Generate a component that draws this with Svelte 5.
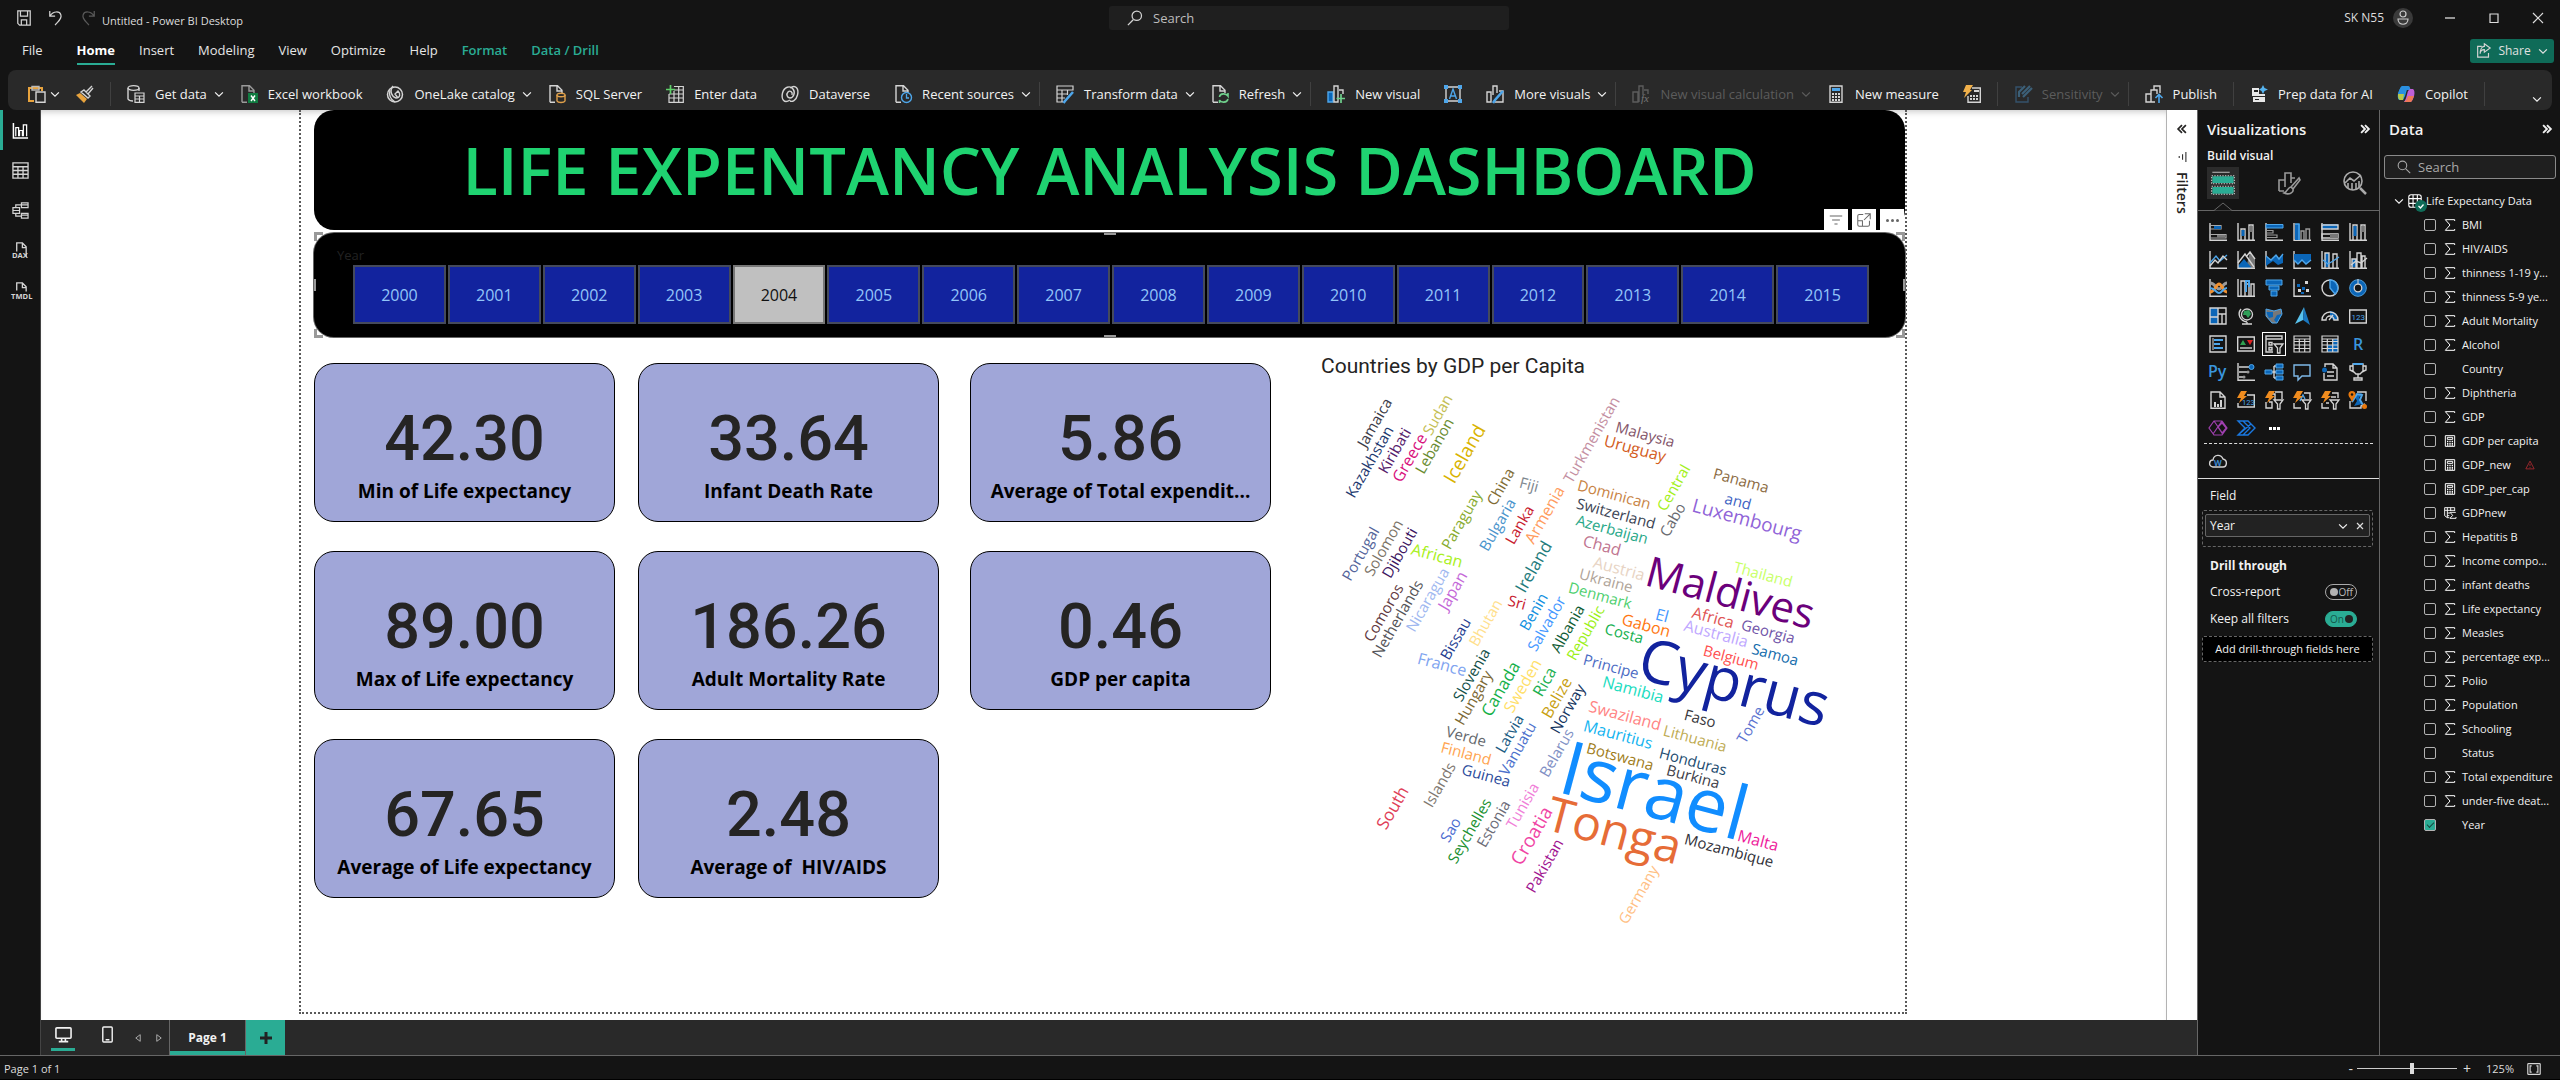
<script>
  const W = '#d4d4d4';
  const B = '#0b66b8';
  const L = '#4ea6ea';
  const s = (d, c = W, w = 1.4) => `<path d="${d}" fill="none" stroke="${c}" stroke-width="${w}"/>`;
  const f = (d, c = W) => `<path d="${d}" fill="${c}"/>`;
  const axis = s('M1 0V17.2H18');
  const bolt = f('M4 0H10L7 5H10L2 12L4 7H0Z', '#f08c1e');
  const funnel = s('M9 9H18L15 13V18H12.500V13Z', W, 1.3);
  const page = s('M2 17.3V.7H9.500L14 5.200V8M9 1V6H14M2 17.3H7');

  const icons = {
    save: s('M2 1H16V17H4L2 15ZM5 1V7H13V1M6 17V11H12V17'),
    undo: s('M2 1V7H8M2.500 6.500C6 1 13 1 14.500 5.500C16 10 11 13 8 17'),
    redo: s('M16 1V7H10M15.500 6.500C12 1 5 1 3.500 5.500C2 10 7 13 10 17', '#5a5a5a'),
    search: s('M7 11L1 17', W, 1.5) + '<circle cx="11" cy="6.500" r="5.300" fill="none" stroke="#d4d4d4" stroke-width="1.400"/>',
    find: s('M11 11L17 17', '#a8a8a8', 1.4) + '<circle cx="7" cy="7" r="5.500" fill="none" stroke="#a8a8a8" stroke-width="1.400"/>',
    chevron: s('M2 6L9 13L16 6', 'currentColor', 2.2),
    paste: s('M6 16H1V3H14V6', '#e8a33d', 2) + s('M4 1.500H11V5H4Z', '#bbb') + s('M8 7H17V17.300H8Z'),
    brush: s('M16 1L10 7L12 9L17 3M8 5L14 11L12 13L5 7Z') + f('M4 8L11 14L8 18L0 10Z', '#e8a33d'),
    getdata: s('M1 3V14C2 16 4 16 6 16M12 3V6') + '<ellipse cx="6.500" cy="3" rx="5.500" ry="2.300" fill="none" stroke="#d4d4d4" stroke-width="1.300"/>' + s('M8 8H17V17.300H8ZM8 11H17M8 14H17M12.500 11V17', W, 1.2),
    excel: s('M2 17.300V.7H9.500L14 5.200V8M9 1V6H14M2 17.3H7', '#9a9a9a') + f('M8 8H18V18H8Z', '#107c41') + s('M11 10.500L15 16M15 10.500L11 16', '#fff', 1.4),
    onelake: '<circle cx="9" cy="9.500" r="7.500" fill="none" stroke="#d4d4d4" stroke-width="1.500"/>' + s('M7 1C3 6 6 12 10 13C14 13 15 9 12 6L9 9L12 13') + s('M4 5C3 9 4 14 9 17'),
    sql: page + s('M9 10V16C10 18 16 18 17 16V10', '#e0a04a') + '<ellipse cx="13" cy="10" rx="4" ry="1.800" fill="none" stroke="#e0a04a" stroke-width="1.400"/>',
    enter: s('M8 1.500H17.300V17.300H3V9M3 9H17.300M3 13H17.300M8 5H17.300M8 6V17M12.700 1V17', W, 1.2) + s('M4.500 0V9M0 4.500H9', '#5fd06a', 1.7),
    dataverse: s('M9 15C3 19 0 14 1.500 8C3 2 9 0 12 4C15 8 12 13 9 13C6 13 5 9 7 7C9 5 12 7 11 10M9 3C15 -1 18 4 16.500 10C15 16 11 17 9 16'),
    recent: page + '<circle cx="12.500" cy="12.500" r="5" fill="#292929" stroke="#4ea6ea" stroke-width="1.400"/>' + s('M12.500 9V13H15', L, 1.3),
    transform: s('M1 1H17V5H1ZM1 5V17H7M1 9H12M1 13H9M6 5V17M11.500 5V10', W, 1.2) + s('M17 7L9 16L7.500 18', L, 2.6),
    refresh: page + s('M8.500 12C9 8 15 8 17 11V8M17 14C16 18 10 18 8.500 15V18', '#6fd08c', 1.6),
    newvisual: f('M1 7H6V17H1Z', B) + s('M1 7H6V17H1Z', L) + s('M7 17V1H11V17ZM12 5H16V9') + s('M14 9V18M9.500 13.500H18', '#6fd08c', 1.7),
    textbox: s('M2 2H16V16H2Z') + s('M5.500 14L9 4L12.500 14M7 11H11', L, 1.4) + f('M0 0H4V4H0ZM14 0H18V4H14ZM0 14H4V18H0ZM14 14H18V18H14Z', L),
    more: s('M1 7H5V17H1ZM7 10V1H11V8M9 17H17V6H13') + s('M17 6L9 15L7 18', L, 2.6),
    calc: s('M1 7H6V17H1ZM7 17V1H11V10M12 5H16V9', '#5c5c5c') + '<text x="9" y="17" font-size="11" font-style="italic" fill="#777" font-family="Liberation Serif, serif">fx</text>',
    measure: s('M3 1H15V17.300H3Z') + f('M5 3H13V6H5Z', L) + f('M5 8h2v2H5zM8 8h2v2H8zM11 8h2v2h-2zM5 11h2v2H5zM8 11h2v2H8zM11 11h2v2h-2zM5 14h2v2H5zM8 14h2v2H8zM11 14h2v2h-2z'),
    quick: s('M9 3H17.300V17.300H5V11', W) + f('M11 5h5v2h-5zM7 10h2v2H7zM10 10h2v2h-2zM13 10h2v2h-2zM7 13h2v2H7zM10 13h2v2h-2zM13 13h2v2h-2z') + f('M3 0H10L7 5H9L1 13L3 7H0Z', '#f0b04a'),
    sensitivity: s('M8 2H2V17H14V12', '#34526b') + s('M16 1L8 9M18 3L9 12M11 1L5 7V12', '#3c6078', 2.2),
    publish: s('M1 9H6V17H1ZM6 17V5H12V9M9 5V1H15V8M6 17H10') + s('M14 18V10M10.500 13L14 9.500L17.500 13', L, 1.6),
    prep: f('M2 3H9V9H15V11H2ZM3 12H15V17H3Z', '#e8e8e8') + f('M4 5H8V7H4ZM5 14H9V15H5Z', '#222') + f('M13 0L14.500 3L18 4.500L14.500 6L13 9L11.500 6L9 4.500L11.500 3Z', '#56b4f0'),
    copilot: f('M5 1H11L8 11L6 15H2C-1 12 2 4 5 1Z', '#2aa4e8') + f('M5 1H11C13 1 13 3 13.500 5H9L7 11H1C1 7 3 3 5 1Z', '#2a8fe0') + f('M1 9H7L6 15H3C1 14 1 12 1 9Z', '#b8c848') + f('M13 4H16C19 6 17 14 14 17H7C9 15 10 9 11 6Z', '#c060d8') + f('M11 11H17C16 14 15 16 14 17H7C9 16 10 14 11 11Z', '#f07858'),
    share: s('M7 4H2V17H15V12') + s('M10 1L17 6L10 11V8C7 8 5 10 5 13C5 8 7 4 10 4Z'),
    report: s('M1.500 1V17H17', '#fff', 1.6) + s('M4 15V6H7V15M8 15V9H11V15M12 15V3H15.500V15', '#fff', 1.3),
    table: s('M1 1H17V17H1ZM1 5H17M1 9H17M1 13H17M6.300 5V17M11.700 5V17'),
    model: s('M10 1H17V6H10ZM10 12H17V17H10ZM1 6H8V12H1ZM1 9H8M10 3H17M10 14H17M4 6V3H10M4 12V15H10', W, 1.3),
    dax: s('M5 10V1H11L15 5V16M11 1V6H15') + '<text x="0" y="17" font-size="8" font-weight="700" fill="#d4d4d4" font-family="Open Sans, sans-serif">DAX</text>',
    tmdl: s('M5 9V1H11L15 5V10M11 1V6H15') + '<text x="-1" y="18" font-size="8" font-weight="700" fill="#d4d4d4" font-family="Open Sans, sans-serif">TMDL</text>',
    filter: s('M1 4H17M4 9H14M7 14H11', '#666', 1.3),
    focus: s('M8 2H3Q1 2 1 4V15Q1 17 3 17H14Q16 17 16 15V10M1 10H7V17M10 1H17V8M17 1L9 9', '#666', 1.3),
    sigma: s('M16 3V1H2L9 9L2 17H16V15', '#fff', 1.5),
    calculator: s('M2 1H16V17H2ZM5 3.500H13V6.500H5Z', '#fff', 1.5) + f('M4.500 8.500h2v2h-2zM8 8.500h2v2H8zM11.500 8.500h2v2h-2zM4.500 11.500h2v2h-2zM8 11.500h2v2H8zM11.500 11.500h2v2h-2zM4.500 14h2v2h-2zM8 14h2v2H8zM11.500 14h2v2h-2z', '#fff'),
    column: s('M8 16H5L1 13V1H16V6M5 1V16M1 5H16M5 9H9M5 13H8M10 1V6', '#fff', 1.4) + s('M17 9V8H9L13 12.500L9 17H18V15', '#fff', 1.4),
    grid: s('M1 4Q1 1 4 1H14Q17 1 17 4V14Q17 17 14 17H4Q1 17 1 14ZM1 6H17M1 12H17M6.500 1V17M12 1V17', '#fff', 1.4),
    fields: s('M1 1H14', '#999', 1) + f('M1 4H17V9H1ZM1 12H17V17H1Z', '#2aac94') + '<path d="M.5 3.500H17.500V9.500H.5ZM.5 11.500H17.500V17.500H.5Z" fill="none" stroke="#ccc" stroke-dasharray="1 1" stroke-width=".8"/>',
    warn: s('M9 2L16.500 16H1.500ZM9 7V11M9 13V14.500', '#b02a30', 1.5),
    cloud: s('M4 15C-1 14 0 8 4 8C5 2 12 2 14 7C19 8 18 15 14 15Z', W) + '<text x="5" y="13.500" font-size="8" font-weight="700" fill="#3c8ad0" font-family="Open Sans, sans-serif">W</text>',
    monitor: s('M2 2H16Q17 2 17 3V12Q17 13 16 13H2Q1 13 1 12V3Q1 2 2 2ZM4 16.500H14M7 13V16M11 13V16', '#f2f2f2', 1.7),
    phone: s('M5 1H13Q14 1 14 2V16Q14 17 13 17H5Q4 17 4 16V2Q4 1 5 1ZM7 14.500H11', '#f2f2f2', 1.5),
    prev: s('M13 3V15L5 9Z', '#aaa', 1.8),
    next: s('M5 3V15L13 9Z', '#aaa', 1.8),
    fit: s('M2 2H16Q17 2 17 3V15Q17 16 16 16H2Q1 16 1 15V3Q1 2 2 2ZM6 5H4V13H6M12 5H14V13H12', W, 1.5),
    collapse: s('M9 4L4 9L9 14M14 4L9 9L14 14', 'currentColor', 2.2),
    expand: s('M4 4L9 9L4 14M9 4L14 9L9 14', 'currentColor', 2.4),
    funnelside: s('M16 0V18M10 4V14M4 7V11', '#333', 2)
  };

  const visuals = [
    ['Stacked bar chart', axis + s('M1 2.500H12V6H1ZM1 11.500H17V15H1Z', '#aaa', 1.2) + f('M5 3H12V6H5Z', B) + f('M8 12H16V14.500H8Z', '#777')],
    ['Stacked column chart', axis + s('M4 17V6H8V17M12 17V2H16V17') + f('M4.500 7H7.500V13H4.500Z', B) + f('M12.500 3H15.500V9H12.500Z', '#777')],
    ['Clustered bar chart', axis + f('M1 1H18V5H1Z', B) + s('M1 1.500H18V5H1Z', L, 1) + s('M1 7.500H8V10H1ZM1 12H12V14.500H1Z', '#999', 1.2)],
    ['Clustered column chart', axis + f('M2 1H7V17H2Z', B) + s('M2 1H6V17', L) + s('M8 17V8H11V17M13 17V6H16.500V17', '#999')],
    ['100% stacked bar chart', axis + f('M1 1H17V6H1Z', B) + s('M1 2H17V6H1ZM1 11H17V15H1Z') + f('M9 11H17V15H9Z', '#777')],
    ['100% stacked column chart', axis + s('M4 17V2H8V17M12 17V2H16V17') + f('M4.500 3H7.500V13H4.500Z', B) + f('M12.500 3H15.500V9H12.500Z', '#777')],
    ['Line chart', axis + s('M1 12L7 5L11 10L18 4', L) + s('M1 15L6 9L9 12L14 5L18 9')],
    ['Area chart', f('M13 1L18 8V17H9Z', '#777') + f('M1 15L7 8L14 16V17H1Z', B) + s('M1 12L8 3L17 16M9 6L13 1L18 8') + axis],
    ['Stacked area chart', axis + f('M1 5L6 9L11 4L14 8L18 3V12L13 14L8 10L1 15Z', B) + s('M1 5L6 9L11 4L14 8L18 3', L)],
    ['Ribbon area chart', axis + f('M1 3H18V9L13 13L9 9L5 13L1 9Z', B) + s('M1 9L5 13L9 9L13 13L18 9', L)],
    ['Line and stacked column chart', axis + f('M4 2H8V16H4Z', B) + s('M4 17V2H8V17M12 17V3H16V17') + s('M2 9L7 13L12 10L18 6', L)],
    ['Line and clustered column chart', axis + f('M3 8H7V16H3Z', B) + s('M3 17V8H7V17M8 17V2H12V17M13 17V5H16V17') + s('M2 14L7 10L12 12L18 7')],
    ['Ribbon chart', axis + s('M1 4C6 4 7 10 10 10C13 10 14 4 18 4', '#999', 3) + s('M1 13C6 13 7 5 10 5C13 5 14 13 18 13', '#f09030', 3) + s('M1 9C6 9 7 14 10 14C13 14 14 9 18 9', L, 2)],
    ['Waterfall chart', axis + s('M4 17V2H8V17M8 5H12V17M14 17V5H17V17') + s('M9 13V2H12V8', L, 2)],
    ['Funnel chart', f('M1 1H17V6H1ZM4 7H14V11H4ZM6 12H12V17H6Z', B) + s('M1 1H17V6H1ZM4 7H14V11H4ZM6 12H12V17H6Z', L, 1)],
    ['Scatter chart', axis + f('M12 2h3v3h-3zM5 10h3v3H5zM13 10h3v3h-3z') + f('M4 5h3v3H4zM9 8h3v3H9zM8 13h3v2H8z', B)],
    ['Pie chart', '<circle cx="9" cy="9" r="8" fill="none" stroke="#d4d4d4" stroke-width="1.400"/>' + f('M9 1A8 8 0 0 1 14 15L9 9Z', B) + s('M9 1A8 8 0 0 1 14 15L9 9Z', L)],
    ['Donut chart', '<circle cx="9" cy="9" r="6" fill="none" stroke="#0b66b8" stroke-width="4"/><circle cx="9" cy="9" r="8.300" fill="none" stroke="#4ea6ea"/><circle cx="9" cy="9" r="3.800" fill="none" stroke="#d4d4d4" stroke-width="1.300"/><path d="M9 0V5" stroke="#d4d4d4"/>'],
    ['Treemap', f('M1 1H9V17H1Z', B) + s('M1 1H17V17H1ZM9 1V17M1 10H9M9 7H17M13 7V17')],
    ['Map', '<circle cx="10" cy="7.500" r="5.500" fill="#1a1a1a" stroke="#d4d4d4" stroke-width="1.300"/>' + f('M7 4L12 3L14 7L11 11L9 8L6 8Z', '#2f9e58') + s('M4 2C0 7 3 14 10 15M5 17H15M10 15V17')],
    ['Filled map', f('M1 2L9 4L16 2L17 7L12 16L7 16L1 9Z', '#777') + f('M1 5L8 5L8 10L4 11ZM12 8L17 7L12 16L9 13Z', B) + s('M1 2L9 4L16 2L17 7L12 16L7 16L1 9Z', L, 1)],
    ['Azure map', f('M11 0L2 17L10 13Z', '#59c3ee') + f('M11 0L17 18L10 13Z', '#1a78c0')],
    ['Gauge', f('M9 4A8 8 0 0 1 17 13H12L9 9Z', B) + s('M1 13A8 8 0 0 1 17 13H13A4 4 0 0 0 5 13ZM8 13L12 8')],
    ['Card', s('M.7 3H17.300V16H.7Z') + '<text x="2.500" y="13" font-size="8" fill="#4ea6ea" font-family="Roboto, sans-serif">123</text>'],
    ['Multi-row card', s('M1 1H17V17H1Z') + s('M4 3V15', W, 1) + s('M5 5H14M5 9H11M5 13H14', L, 2)],
    ['KPI', s('M.7 2H17.300V16H.7Z') + f('M3 10L6 5L9 10Z', '#2fa050') + f('M10 5H16L13 10Z', '#e02020') + s('M3 13H15')],
    ['Slicer', s('M1 1H17V4H1ZM1 4V17H8M4 7.500H7V10H4ZM4 12.500H7V15H4Z') + funnel, true],
    ['Table', s('M1 1H17V17H1ZM1 6.500H17M1 10H17M1 13.500H17M6.300 4V17M11.700 4V17M1 4H17', W, 1.2)],
    ['Matrix', f('M12 4H17V17H12ZM6 10H17V17H6Z', B) + s('M1 1H17V17H1ZM1 6.500H17M1 10H17M1 13.500H17M6.300 4V17M11.700 4V17M1 4H17', W, 1.2)],
    ['R script visual', '<text x="4" y="15" font-size="16" font-weight="600" fill="#3a96dd" font-family="Open Sans, sans-serif">R</text>'],
    ['Python visual', '<text x="-1" y="14" font-size="16" font-weight="600" fill="#3a96dd" font-family="Open Sans, sans-serif">Py</text>'],
    ['Key influencers', axis + s('M2 4H12M2 9H10M2 14H6') + '<circle cx="14.500" cy="4" r="2.500" fill="#0b66b8" stroke="#4ea6ea"/><circle cx="11" cy="9" r="1.500" fill="#999"/><circle cx="7" cy="14" r="1.500" fill="#999"/>'],
    ['Decomposition tree', s('M6 9H11M9 3V15M9 3H12M9 15H12') + f('M0 7H7V11H0ZM11 1H18V5H11ZM11 7H18V11H11ZM11 13H18V17H11Z', B) + s('M0 7H7V11H0ZM11 1H18V5H11ZM11 7H18V11H11ZM11 13H18V17H11Z', L, 1)],
    ['Q&A', s('M1 2H17V13H9L5 17V13H1Z', '#7eb8e8')],
    ['Smart narrative', s('M4 4V1H12L16 5V17H3V10M12 1V5H16M6 9H13M6 13H13') + '<circle cx="3.500" cy="7" r="2.500" fill="#0b66b8"/>'],
    ['Metrics', s('M4 1H14V8L11 11H7L4 8ZM4 3H1V7L5 9M14 3H17V7L13 9M9 11V15M5 17H13V15H5Z') + s('M4 1H14', L, 2)],
    ['Paginated report', s('M2 1H11L16 6V17.300H2ZM11 1V6H16') + f('M5 11h2v5H5zM8 13h2v3H8zM11 9h2v7h-2z')],
    ['Card (new)', s('M10 4H17.300V16H1V12') + '<text x="5" y="14" font-size="7.500" fill="#4ea6ea" font-family="Roboto, sans-serif">123</text>' + bolt],
    ['Button slicer', s('M10 1H17V8M1 11V17H7V11H4M7 3H10V9') + bolt + funnel],
    ['List slicer', s('M11 2H17V8M1 12V17H8') + s('M7 10L10 4L12 8', L) + bolt + funnel],
    ['Input slicer', s('M11 2H17V7M1 12V17H8M5 12H8M10 6H15') + bolt + funnel],
    ['ArcGIS map', s('M8 1H17V10M1 10V17H12V15L16 13') + f('M5 4L13 2L10 7L13 13L5 15L8 10Z', B) + s('M3 11L8 3L13 4L11 9L14 14', L, 2) + '<circle cx="3" cy="3.500" r="3.500" fill="#e8780c"/><circle cx="15.500" cy="15.500" r="2.500" fill="#e8780c"/>' + f('M0 5H6L3 11Z', '#e8780c') + '<circle cx="3" cy="3.500" r="1.200" fill="#141414"/>'],
    ['Power Apps', s('M5 2H13L18 9L13 16H5L0 9ZM5 2L14 15M13 2L4 15M9 8L13 4L17 9L13 14Z', '#a040b0', 1.2)],
    ['Power Automate', s('M1 2H11L18 9L11 16H1L8 9ZM6 2L13 9L6 16M1 16L14 5', '#1a78e0', 1.4)]
  ];

  const tabs = ['File', 'Home', 'Insert', 'Modeling', 'View', 'Optimize', 'Help', 'Format', 'Data / Drill'];

  // icon, label, drop-down, disabled
  const ribbon = [
    [['paste', '', true], ['brush', '']],
    [['getdata', 'Get data', true], ['excel', 'Excel workbook'], ['onelake', 'OneLake catalog', true], ['sql', 'SQL Server'], ['enter', 'Enter data'], ['dataverse', 'Dataverse'], ['recent', 'Recent sources', true]],
    [['transform', 'Transform data', true], ['refresh', 'Refresh', true]],
    [['newvisual', 'New visual'], ['textbox', ''], ['more', 'More visuals', true]],
    [['calc', 'New visual calculation', true, true], ['measure', 'New measure'], ['quick', '']],
    [['sensitivity', 'Sensitivity', true, true]],
    [['publish', 'Publish']],
    [['prep', 'Prep data for AI'], ['copilot', 'Copilot']]
  ];

  const rail = [['report', 'Report view'], ['table', 'Table view'], ['model', 'Model view'], ['dax', 'DAX query view'], ['tmdl', 'TMDL view']];

  const years = Array.from({ length: 16 }, (_, i) => 2000 + i);
  let year = $state(2004);

  const columns = [
    [['42.30', 'Min of Life expectancy'], ['89.00', 'Max of Life expectancy'], ['67.65', 'Average of Life expectancy']],
    [['33.64', 'Infant Death Rate'], ['186.26', 'Adult Mortality Rate'], ['2.48', 'Average of  HIV/AIDS']],
    [['5.86', 'Average of Total expendit...'], ['0.46', 'GDP per capita']]
  ];

  // word, centre x, centre y, colour, size
  const rising = [
    ['Jamaica', 86, 74, '#3c3c48'], ['Kazakhstan', 81, 113, '#1f3a70'], ['Kiribati', 106, 102, '#56206c'], ['Greece', 121, 109, '#d8107c', 16],
    ['Sudan', 149, 66, '#c4be54'], ['Lebanon', 146, 97, '#6a8c30'], ['Iceland', 176, 105, '#d9b300', 19], ['Turkmenistan', 303, 91, '#c48fa2'],
    ['China', 212, 138, '#806c34'], ['Paraguay', 173, 171, '#88ac30'], ['Bulgaria', 209, 176, '#4a94cc'], ['Lanka', 231, 176, '#c81c30'],
    ['Armenia', 256, 166, '#ff9c60', 16], ['Central', 385, 139, '#a4f020'], ['Cabo', 384, 171, '#6a6a70'], ['Portugal', 72, 205, '#54649a'],
    ['Solomon', 95, 199, '#7c7468'], ['Djibouti', 111, 204, '#3c1460'], ['Ireland', 245, 218, '#1f7c7c', 17], ['Comoros', 95, 264, '#603840'],
    ['Netherlands', 109, 270, '#545458'], ['Nicaragua', 139, 251, '#a0b8f0'], ['Japan', 164, 242, '#c468d8', 16], ['Benin', 245, 263, '#1090e0'],
    ['Salvador', 258, 275, '#4498ff'], ['Albania', 279, 280, '#105c34'], ['Republic', 297, 284, '#9cf018'], ['Bhutan', 197, 274, '#ffe08c'],
    ['Bissau', 167, 290, '#243c90'], ['Slovenia', 183, 326, '#145048'], ['Hungary', 185, 349, '#7c6834'], ['Canada', 212, 340, '#14b048', 17],
    ['Sweden', 234, 337, '#ffe068', 16], ['Rica', 256, 333, '#20b050', 16], ['Belize', 268, 349, '#c8a010', 16], ['Norway', 279, 360, '#143460'],
    ['Tome', 462, 376, '#5c74d0'], ['Latvia', 221, 385, '#205c84'], ['Vanuatu', 229, 400, '#4c70cc'], ['Belarus', 268, 404, '#8090c4'],
    ['South', 104, 459, '#e04058', 17], ['Islands', 151, 436, '#807870'], ['Sao', 162, 481, '#4c6cd0'], ['Seychelles', 181, 482, '#209030'],
    ['Estonia', 205, 475, '#6c6c78'], ['Tunisia', 234, 457, '#f080d8'], ['Croatia', 243, 487, '#f044a4', 19], ['Pakistan', 256, 517, '#a01490'],
    ['Germany', 350, 546, '#ffbf84']
  ];
  const falling = [
    ['Fiji', 240, 136, '#808890'], ['Malaysia', 356, 86, '#84566a'], ['Uruguay', 346, 100, '#d35c1c', 16], ['Panama', 452, 132, '#8c6c44'],
    ['and', 449, 153, '#4064c4'], ['Luxembourg', 458, 171, '#9064d8', 19], ['Dominican', 325, 146, '#c88444'], ['Switzerland', 327, 165, '#3c4454'],
    ['Azerbaijan', 323, 181, '#28a888'], ['Chad', 313, 197, '#c07490', 16], ['Austria', 330, 220, '#e8d4c4', 16], ['Ukraine', 317, 232, '#b0a498'],
    ['Denmark', 311, 247, '#50d070'], ['Maldives', 441, 245, '#6b007b', 42], ['Thailand', 474, 226, '#c8ff68'], ['Sri', 228, 254, '#c81c30'],
    ['El', 373, 267, '#4498ff', 16], ['Gabon', 357, 277, '#ff7814', 16], ['Africa', 424, 269, '#e05454', 16], ['Georgia', 479, 283, '#7054a8'],
    ['Australia', 427, 285, '#c0a8ff', 16], ['Costa', 335, 285, '#14b050'], ['African', 148, 207, '#a8f020', 16], ['Samoa', 486, 306, '#146cac'],
    ['Principe', 322, 318, '#4c6cc4'], ['Belgium', 442, 309, '#ff5050'], ['Namibia', 344, 341, '#20dcc0', 16], ['Cyprus', 445, 335, '#12239e', 60],
    ['Faso', 411, 370, '#38383c'], ['Swaziland', 336, 367, '#ff8484', 16], ['Mauritius', 329, 386, '#14b4f0', 16], ['Lithuania', 406, 390, '#c0ac54'],
    ['Botswana', 331, 408, '#a07c18'], ['Honduras', 404, 413, '#1c4c70'], ['Burkina', 404, 428, '#404048'], ['Israel', 365, 444, '#118dff', 75],
    ['Tonga', 325, 483, '#e66c37', 48], ['Malta', 469, 492, '#ee1c9c', 16], ['Mozambique', 440, 502, '#303038'], ['France', 153, 316, '#80a4f0', 16],
    ['Verde', 177, 388, '#64686c'], ['Finland', 177, 405, '#ffa450'], ['Guinea', 197, 427, '#2c4c9c']
  ];
  const words = [...rising.map((w) => [...w.slice(0, 4), w[4] ?? 15, -60]), ...falling.map((w) => [...w.slice(0, 4), w[4] ?? 15, 15])];

  // name, icon, warning, ticked
  const fields = [
    ['BMI', 'sigma'], ['HIV/AIDS', 'sigma'], ['thinness 1-19 y...', 'sigma'], ['thinness 5-9 ye...', 'sigma'], ['Adult Mortality', 'sigma'],
    ['Alcohol', 'sigma'], ['Country', ''], ['Diphtheria', 'sigma'], ['GDP', 'sigma'], ['GDP per capita', 'calculator'],
    ['GDP_new', 'calculator', true], ['GDP_per_cap', 'calculator'], ['GDPnew', 'column'], ['Hepatitis B', 'sigma'], ['Income compo...', 'sigma'],
    ['infant deaths', 'sigma'], ['Life expectancy', 'sigma'], ['Measles', 'sigma'], ['percentage exp...', 'sigma'], ['Polio', 'sigma'],
    ['Population', 'sigma'], ['Schooling', 'sigma'], ['Status', ''], ['Total expenditure', 'sigma'], ['under-five deat...', 'sigma'], ['Year', '', false, true]
  ];
</script>

{#snippet icon(name, cls = '')}
  <svg class="ico {cls}" viewBox="0 0 18 18" aria-hidden="true">{@html icons[name]}</svg>
{/snippet}

<div class="app">
  <header>
    <div class="titlebar">
      <div class="quick">
        <button aria-label="Save">{@render icon('save')}</button>
        <button aria-label="Undo">{@render icon('undo', 's14')}</button>
        <button aria-label="Redo">{@render icon('redo', 's14')}</button>
        <span class="doc">Untitled - Power BI Desktop</span>
      </div>
      <label class="topsearch">{@render icon('search')}<input type="text" placeholder="Search" aria-label="Search" /></label>
      <div class="window">
        <span>SK N55</span>
        <svg class="avatar" viewBox="0 0 20 20" aria-hidden="true"><circle cx="10" cy="10" r="10" fill="#3a3a3a" /><circle cx="10" cy="6" r="3" fill="none" stroke="#ccc" stroke-width="1.200" /><path d="M5 11H15C15 18 5 18 5 11Z" fill="none" stroke="#ccc" stroke-width="1.200" /></svg>
        <button aria-label="Minimize"><svg viewBox="0 0 10 10"><path d="M0 5H10" stroke="#ddd" stroke-width="1.300" /></svg></button>
        <button aria-label="Maximize"><svg viewBox="0 0 10 10"><path d="M1 1H9V9.500H1Z" fill="none" stroke="#ddd" stroke-width="1.200" /></svg></button>
        <button aria-label="Close"><svg viewBox="0 0 10 10"><path d="M0 0L10 10M10 0L0 10" stroke="#ddd" stroke-width="1.200" /></svg></button>
      </div>
    </div>
    <nav class="tabs">
      {#each tabs as t}
        <button class:active={t === 'Home'} class:context={t === 'Format' || t === 'Data / Drill'} class:file={t === 'File'}>{t}</button>
      {/each}
      <button class="share">{@render icon('share')}Share{@render icon('chevron', 's10')}</button>
    </nav>
    <div class="ribbon">
      {#each ribbon as group}
        <div class="group" class:tight={group[group.length - 1][2]}>
          {#each group as [name, label, drop, disabled]}
            <button class="cmd" class:menu={drop} {disabled} aria-label={label || name}>{@render icon(name)}{#if label}<span>{label}</span>{/if}{#if drop}{@render icon('chevron', 's10')}{/if}</button>
          {/each}
        </div>
      {/each}
      <button class="fold" aria-label="Collapse ribbon">{@render icon('chevron', 's10')}</button>
    </div>
  </header>

  <div class="body">
    <nav class="rail">
      {#each rail as [name, label], i}
        <button class:on={i === 0} aria-label={label}>{@render icon(name)}</button>
      {/each}
    </nav>

    <div class="work">
      <div class="stage">
        <main class="canvas">
          <div class="page">
            <h1>LIFE EXPENTANCY ANALYSIS DASHBOARD</h1>
            <section class="slicer">
              <div class="tools">
                <button aria-label="Filters">{@render icon('filter')}</button>
                <button aria-label="Focus mode">{@render icon('focus', 's14')}</button>
                <button aria-label="More options"><i></i><i></i><i></i></button>
              </div>
              <b class="h tl"></b><b class="h tr"></b><b class="h bl"></b><b class="h br"></b>
              <b class="m ml"></b><b class="m mr"></b><b class="m mt"></b><b class="m mb"></b>
              <div class="head">Year</div>
              <div class="years">
                {#each years as y}
                  <button class:picked={y === year} onclick={() => (year = y)}>{y}</button>
                {/each}
              </div>
            </section>
            <div class="visuals">
              <div class="kpis">
                {#each columns as col}
                  <div class="col">
                    {#each col as [value, label]}
                      <article class="card"><div class="value">{value}</div><div class="label">{label}</div></article>
                    {/each}
                  </div>
                {/each}
              </div>
              <section class="cloud">
                <h2>Countries by GDP per Capita</h2>
                <svg viewBox="32 30 530 560">
                  {#each words as [word, x, y, color, size, angle]}
                    <text text-anchor="middle" dy="0.32em" font-size={size} fill={color} transform="translate({x} {y}) rotate({angle})">{word}</text>
                  {/each}
                </svg>
              </section>
            </div>
          </div>
        </main>
        <aside class="filters">
          <button aria-label="Expand filters">{@render icon('collapse', 's14')}</button>
          {@render icon('funnelside', 's10')}
          <span>Filters</span>
        </aside>
      </div>
      <footer class="pages">
        <button class="view on" aria-label="Desktop layout">{@render icon('monitor')}</button>
        <button class="view" aria-label="Mobile layout">{@render icon('phone')}</button>
        <button class="step" aria-label="Previous page">{@render icon('prev', 's10')}</button>
        <button class="step" aria-label="Next page">{@render icon('next', 's10')}</button>
        <button class="tab">Page 1</button>
        <button class="add" aria-label="New page"><svg viewBox="0 0 12 12"><path d="M6 0V12M0 6H12" stroke="#222" stroke-width="3" /></svg></button>
      </footer>
    </div>

    <aside class="viz">
      <div class="panehead"><h3>Visualizations</h3><button aria-label="Collapse">{@render icon('expand', 's14')}</button></div>
      <h4>Build visual</h4>
      <div class="modes">
        <button class="on" aria-label="Build visual">{@render icon('fields', 's24')}</button>
        <button aria-label="Format visual"><svg class="s24" viewBox="0 0 24 24" fill="none" stroke="#999" stroke-width="1.600"><path d="M2 20V9H8V16M8 12V2H14V12M14 7H18M2 20H7" /><path d="M22 7L14 16L16 18L23 9ZM14 16C11 16 11 20 7 22C12 24 17 22 16 18Z" /></svg></button>
        <button aria-label="Analytics"><svg class="s24" viewBox="0 0 24 24" fill="none" stroke="#aaa" stroke-width="1.600"><circle cx="10" cy="10" r="9" /><path d="M2 12L7 7L11 10L18 4M5 17V12M9 19V12M13 18V12M16 16V10" /><path d="M17 17L23 23" stroke-width="2.500" /></svg></button>
      </div>
      <svg class="notch" viewBox="0 0 18 9" aria-hidden="true"><path d="M0 8.500L9 1L18 8.500" fill="#141414" stroke="#666" /></svg>
      <div class="gallery">
        {#each visuals as [name, art, on]}
          <button class:on aria-label={name}><svg class="ico" viewBox="0 0 18 18">{@html art}</svg></button>
        {/each}
        <button class="dots" aria-label="Get more visuals"><i></i><i></i><i></i></button>
      </div>
      <div class="custom"><button aria-label="Word Cloud">{@render icon('cloud')}</button></div>
      <div class="wells">
        <div class="wlabel">Field</div>
        <div class="well"><div class="pill"><span>Year</span>{@render icon('chevron', 's10')}<svg class="s8" viewBox="0 0 8 8"><path d="M1 1L7 7M7 1L1 7" stroke="#ddd" stroke-width="1.200" /></svg></div></div>
        <div class="wlabel strong">Drill through</div>
        <label class="switch">Cross-report<input type="checkbox" /><span class="track">Off</span></label>
        <label class="switch">Keep all filters<input type="checkbox" checked /><span class="track">On</span></label>
        <div class="drop">Add drill-through fields here</div>
      </div>
    </aside>

    <aside class="data">
      <div class="panehead"><h3>Data</h3><button aria-label="Collapse">{@render icon('expand', 's14')}</button></div>
      <label class="find">{@render icon('find', 's14')}<input type="text" placeholder="Search" aria-label="Search fields" /></label>
      <button class="root">{@render icon('chevron', 's10')}<span class="tbl">{@render icon('grid', 's14')}<svg class="badge" viewBox="0 0 12 12"><circle cx="6" cy="6" r="6" fill="#0f6b58" /><path d="M3.500 6L5.500 8L8.500 4.500" fill="none" stroke="#fff" stroke-width="1.300" /></svg></span>Life Expectancy Data</button>
      <ul>
        {#each fields as [name, kind, warn, ticked]}
          <li><label><input type="checkbox" checked={ticked} /><span class="kind">{#if kind}{@render icon(kind, 's12')}{/if}</span><span class="fname">{name}</span>{#if warn}{@render icon('warn', 's10')}{/if}</label></li>
        {/each}
      </ul>
    </aside>
  </div>

  <footer class="status">
    <span>Page 1 of 1</span>
    <div class="zoom"><button aria-label="Zoom out">-</button><input type="range" min="0" max="100" value="55" aria-label="Zoom" /><button aria-label="Zoom in">+</button><span class="pct">125%</span><button aria-label="Fit to page">{@render icon('fit', 's14')}</button></div>
  </footer>
</div>

<style>
  :global(body) { margin: 0; background: #141414; }
  .app { min-height: 100vh; display: flex; flex-direction: column; background: #141414; color: #f2f2f2; font: 13px/16px "Open Sans", "Noto Sans", sans-serif; box-sizing: border-box; }
  .app :global(*) { box-sizing: border-box; }
  button { font: inherit; color: inherit; background: none; border: 0; padding: 0; margin: 0; display: flex; align-items: center; justify-content: center; white-space: nowrap; }
  input { font: inherit; color: inherit; margin: 0; }
  h1, h2, h3, h4, ul { margin: 0; padding: 0; }
  svg { display: block; flex: none; overflow: visible; }
  .ico { width: 18px; height: 18px; }
  .s14 { width: 14px; height: 14px; }
  .s12 { width: 12px; height: 12px; }
  .s10 { width: 10px; height: 10px; }
  .s8 { width: 8px; height: 8px; }
  .s24 { width: 24px; height: 24px; }

  .titlebar { height: 35px; display: grid; grid-template-columns: 1109fr 400px 1051fr; align-items: center; }
  .quick { display: flex; align-items: center; gap: 16px; padding-left: 16px; }
  .quick .ico { width: 16px; height: 16px; }
  .doc { font-size: 11px; margin-left: -10px; padding-top: 6px; color: #ddd; }
  .topsearch { height: 24px; background: #1f1f1f; border-radius: 3px; display: flex; align-items: center; gap: 10px; padding-left: 18px; }
  .topsearch .ico { width: 16px; height: 16px; }
  .topsearch input { flex: 1; min-width: 0; background: none; border: 0; padding: 0; }
  input::placeholder { color: #bdbdbd; opacity: 1; }
  .window { display: flex; align-items: center; justify-content: flex-end; padding-right: 17px; font-size: 12px; color: #ddd; }
  .window button svg { width: 10px; height: 10px; }
  .window button { margin-left: 34px; }
  .avatar { width: 20px; height: 20px; margin-left: 9px; }
  .window .avatar + button { margin-left: 32px; }

  .tabs { height: 35px; display: flex; align-items: center; padding: 0 6px 4px 22px; gap: 24px; color: #e6e6e6; }
  .tabs button { height: 28px; border-bottom: 2px solid transparent; }
  .tabs .file { margin-right: 10px; }
  .tabs .active { font-weight: 700; color: #fff; border-color: #2aac94; }
  .tabs .context { color: #2aac94; font-weight: 600; }
  .tabs .share { margin-left: auto; width: 84px; height: 24px; border: 0; border-radius: 3px; background: #0f6b58; font-size: 12px; gap: 7px; color: #e0e0e0; }
  .share .ico:first-child { width: 15px; height: 15px; }

  .ribbon { height: 40px; margin: 0 8px; background: #292929; border-radius: 8px; display: flex; align-items: center; padding: 8px 0 0; position: relative; z-index: 2; }
  .group { display: flex; align-items: center; gap: 24px; padding: 0 16px; height: 24px; border-right: 1px solid #404040; }
  .group:first-child { padding-left: 20px; }
  .cmd { gap: 10px; }
  .cmd.menu { margin-right: -8px; }
  .cmd .ico + .s10 { margin-left: -6px; }
  .cmd span + .s10 { margin-left: -3px; }
  .cmd:disabled { color: #5c5c5c; }
  .fold { margin-left: auto; margin-right: 10px; padding-top: 10px; }

  .body { flex: 1; display: flex; }
  .rail { width: 41px; border-right: 1px solid #444; display: flex; flex-direction: column; }
  .rail button { height: 40px; border-left: 3px solid transparent; padding-right: 3px; }
  .rail .on { border-color: #2aac94; }
  .rail .ico { width: 17px; height: 17px; }
  .work { flex: 1; min-width: 0; display: flex; flex-direction: column; }
  .stage { flex: 1; display: flex; background: #fff; color: #252423; }
  .canvas { flex: 1; min-width: 0; display: flex; box-shadow: inset 0 6px 6px -4px #ccc; }
  .page { flex: 1; min-width: 0; margin: 0 259px 6px 258px; border: 2px dotted #5a5a5a; border-top: 0; padding-left: 13px; }
  h1 { height: 120px; background: #000; border-radius: 20px; color: #1fd371; font-size: 65px; line-height: 120px; font-weight: 600; text-align: center; overflow: hidden; white-space: nowrap; }
  .slicer { position: relative; height: 104px; margin-top: 3px; background: #000; border-radius: 20px; padding: 12px 36px 14px 39px; box-shadow: 0 0 0 1px #666; }
  .head { font-size: 13px; line-height: 20px; color: #222; margin-left: -16px; }
  .years { display: grid; grid-template-columns: repeat(16, 1fr); gap: 2px; height: 59px; }
  .years button { background: #12239e; color: #92c5f9; border: 2px solid #454a5c; font-size: 16px; line-height: 20px; }
  .years .picked { background: #c0c0c0; color: #111; border-color: #777; }
  .tools { position: absolute; right: 1px; top: -24px; display: flex; gap: 4px; }
  .tools button { width: 24px; height: 22px; background: #fff; }
  .tools .ico { width: 14px; height: 14px; }
  .tools i { width: 3px; height: 3px; border-radius: 2px; background: #666; margin: 0 1px; }
  .h, .m { position: absolute; border: 0 solid #999; }
  .h { width: 9px; height: 9px; }
  .tl { left: 0; top: -1px; border-width: 3px 0 0 3px; }
  .tr { right: 0; top: -1px; border-width: 3px 3px 0 0; }
  .bl { left: 0; bottom: -1px; border-width: 0 0 3px 3px; }
  .br { right: 0; bottom: -1px; border-width: 0 3px 3px 0; }
  .m { background: #999; }
  .ml, .mr { width: 2px; height: 12px; top: 46px; }
  .ml { left: 0; }
  .mr { right: 0; }
  .mt, .mb { width: 12px; height: 2px; left: calc(50% - 6px); }
  .mt { top: 0; }
  .mb { bottom: 0; }

  .visuals { display: flex; gap: 50px; padding-top: 26px; }
  .kpis { flex: 957 1 0; min-width: 0; display: flex; }
  .col { flex: 1 1 0; min-width: 0; display: flex; flex-direction: column; gap: 29px; }
  .col:first-child { margin-right: 23px; }
  .col:last-child { margin-left: 31px; }
  .card { height: 159px; background: #a0a6d8; border: 1px solid #000; border-radius: 20px; text-align: center; padding: 43px 8px 0; overflow: hidden; }
  .value { font: 500 63px/64px Roboto, sans-serif; color: #252423; }
  .label { font-size: 19px; line-height: 24px; font-weight: 700; color: #000; margin-top: 8px; white-space: pre; }
  .cloud { flex: 584 1 0; min-width: 0; }
  h2 { font: 21px/24px Roboto, sans-serif; color: #252423; margin-top: -9px; margin-bottom: 1px; white-space: nowrap; }
  .cloud svg { width: 530px; height: 560px; font-family: "Open Sans", sans-serif; }

  .filters { width: 31px; border-left: 1px solid #b3b3b3; display: flex; flex-direction: column; align-items: center; padding-top: 12px; gap: 16px; }
  .filters span { writing-mode: vertical-rl; font-size: 14px; line-height: 18px; font-weight: 600; margin-top: -6px; }

  .pages { height: 35px; background: #292929; display: flex; }
  .view { width: 24px; margin: 0 10px 4px; border-bottom: 3px solid transparent; }
  .view + .view { margin-right: 8px; }
  .view .ico { width: 17px; height: 17px; }
  .view.on { border-color: #2aac94; }
  .step { width: 21px; }
  .tab { width: 77px; border: 1px solid #666; border-width: 0 1px 0 1px; box-shadow: inset 0 -4px #2aac94; font-weight: 700; font-size: 12px; }
  .add { width: 39px; background: #2aac94; }
  .add svg { width: 12px; height: 12px; }

  .viz { width: 182px; border-left: 1px solid #666; }
  .data { width: 181px; border-left: 1px solid #666; }
  .panehead { display: flex; justify-content: space-between; align-items: center; height: 38px; padding: 0 6px 0 9px; }
  .viz .panehead { padding-right: 7px; }
  h3 { font-size: 15px; line-height: 20px; font-weight: 600; }
  h4 { font-size: 12px; line-height: 16px; font-weight: 600; padding: 0 9px; }
  .modes { display: flex; justify-content: space-between; padding: 3px 8px 0 9px; }
  .modes button { width: 32px; height: 32px; }
  .modes .on { background: #2b2b2b; }
  .notch { width: 18px; height: 9px; margin: 3px 0 -1px 16px; }
  .gallery { border-top: 1px solid #666; display: grid; grid-template-columns: repeat(6, 28px); grid-auto-rows: 28px; padding: 7px 0 1px 6px; border-bottom: 0; }
  .gallery button { width: 24px; height: 24px; place-self: center; }
  .gallery .on { border: 1px solid #fff; }
  .gallery .dots { gap: 1px; }
  .dots i { width: 3px; height: 3px; background: #fff; }
  .custom { margin: 0 6px; border-top: 1px dashed #ddd; height: 35px; display: flex; align-items: center; padding-left: 5px; }
  .wells { border-top: 1px solid #ddd; padding: 9px 6px 0 4px; font-size: 12px; }
  .wlabel { padding-left: 8px; line-height: 16px; }
  .strong { font-weight: 700; margin-top: 11px; }
  .well { border: 1px dashed #666; border-radius: 2px; height: 37px; padding: 3px 2px; margin-top: 6px; }
  .pill { height: 23px; background: #222; border: 1px solid #666; border-radius: 2px; display: flex; align-items: center; padding: 0 5px 0 4px; gap: 8px; }
  .pill span { flex: 1; }
  .switch { display: flex; align-items: center; justify-content: space-between; height: 27px; padding: 0 16px 0 8px; position: relative; }
  .strong + .switch { margin-top: 4px; }
  .switch input { position: absolute; opacity: 0; }
  .track { width: 32px; height: 16px; border: 1px solid #aaa; border-radius: 8px; display: flex; align-items: center; justify-content: space-between; flex-direction: row; padding: 0 3px 0 4px; font-size: 10px; line-height: 12px; color: #bbb; }
  .track::before { content: ""; width: 8px; height: 8px; border-radius: 4px; background: #b3b3b3; }
  .switch input:checked + .track { flex-direction: row-reverse; background: #2aac94; border-color: #2aac94; color: #14584c; }
  .switch input:checked + .track::before { background: #222; }
  .drop { border: 1px dashed #666; border-radius: 2px; background: #000; height: 26px; line-height: 24px; margin-top: 4px; text-align: center; font-size: 11px; white-space: nowrap; }

  .find { height: 24px; margin: 7px 4px 0; background: #1f1f1f; border: 1px solid #8a8a8a; border-radius: 3px; display: flex; align-items: center; gap: 7px; padding-left: 12px; }
  .find input { flex: 1; min-width: 0; border: 0; background: none; padding: 0; }
  .find input::placeholder { color: #a8a8a8; }
  .root { height: 24px; margin: 10px 0 0 14px; gap: 4px; font-size: 11px; }
  .tbl { position: relative; }
  .badge { position: absolute; left: 7px; top: 6px; width: 12px; height: 12px; }
  ul { list-style: none; }
  li label { display: flex; align-items: center; height: 24px; padding-left: 44px; font-size: 11px; white-space: nowrap; }
  li input { appearance: none; width: 12px; height: 12px; border: 1px solid #b3b3b3; border-radius: 2px; flex: none; }
  li input:checked { background: #2aac94; }
  li input:checked::before { content: ""; display: block; width: 6px; height: 3px; margin: 2px 0 0 2px; border: 1px solid #17483f; border-width: 0 0 1px 1px; transform: rotate(-45deg); }
  .kind { width: 26px; padding-left: 8px; flex: none; }
  .fname + .s10 { margin-left: 14px; }

  .status { height: 25px; border-top: 1px solid #666; border-bottom: 1px solid #000; display: flex; align-items: center; justify-content: space-between; padding: 2px 19px 0 4px; font-size: 11px; color: #ddd; }
  .zoom { display: flex; align-items: center; }
  .zoom input { appearance: none; width: 100px; height: 12px; margin: 0 6px 0 4px; background: linear-gradient(#ccc, #ccc) center / 100% 1px no-repeat; }
  .zoom input::-webkit-slider-thumb { appearance: none; width: 4px; height: 11px; background: #ddd; }
  .zoom button { font-size: 14px; }
  .pct { margin: 0 13px 0 15px; }
</style>
